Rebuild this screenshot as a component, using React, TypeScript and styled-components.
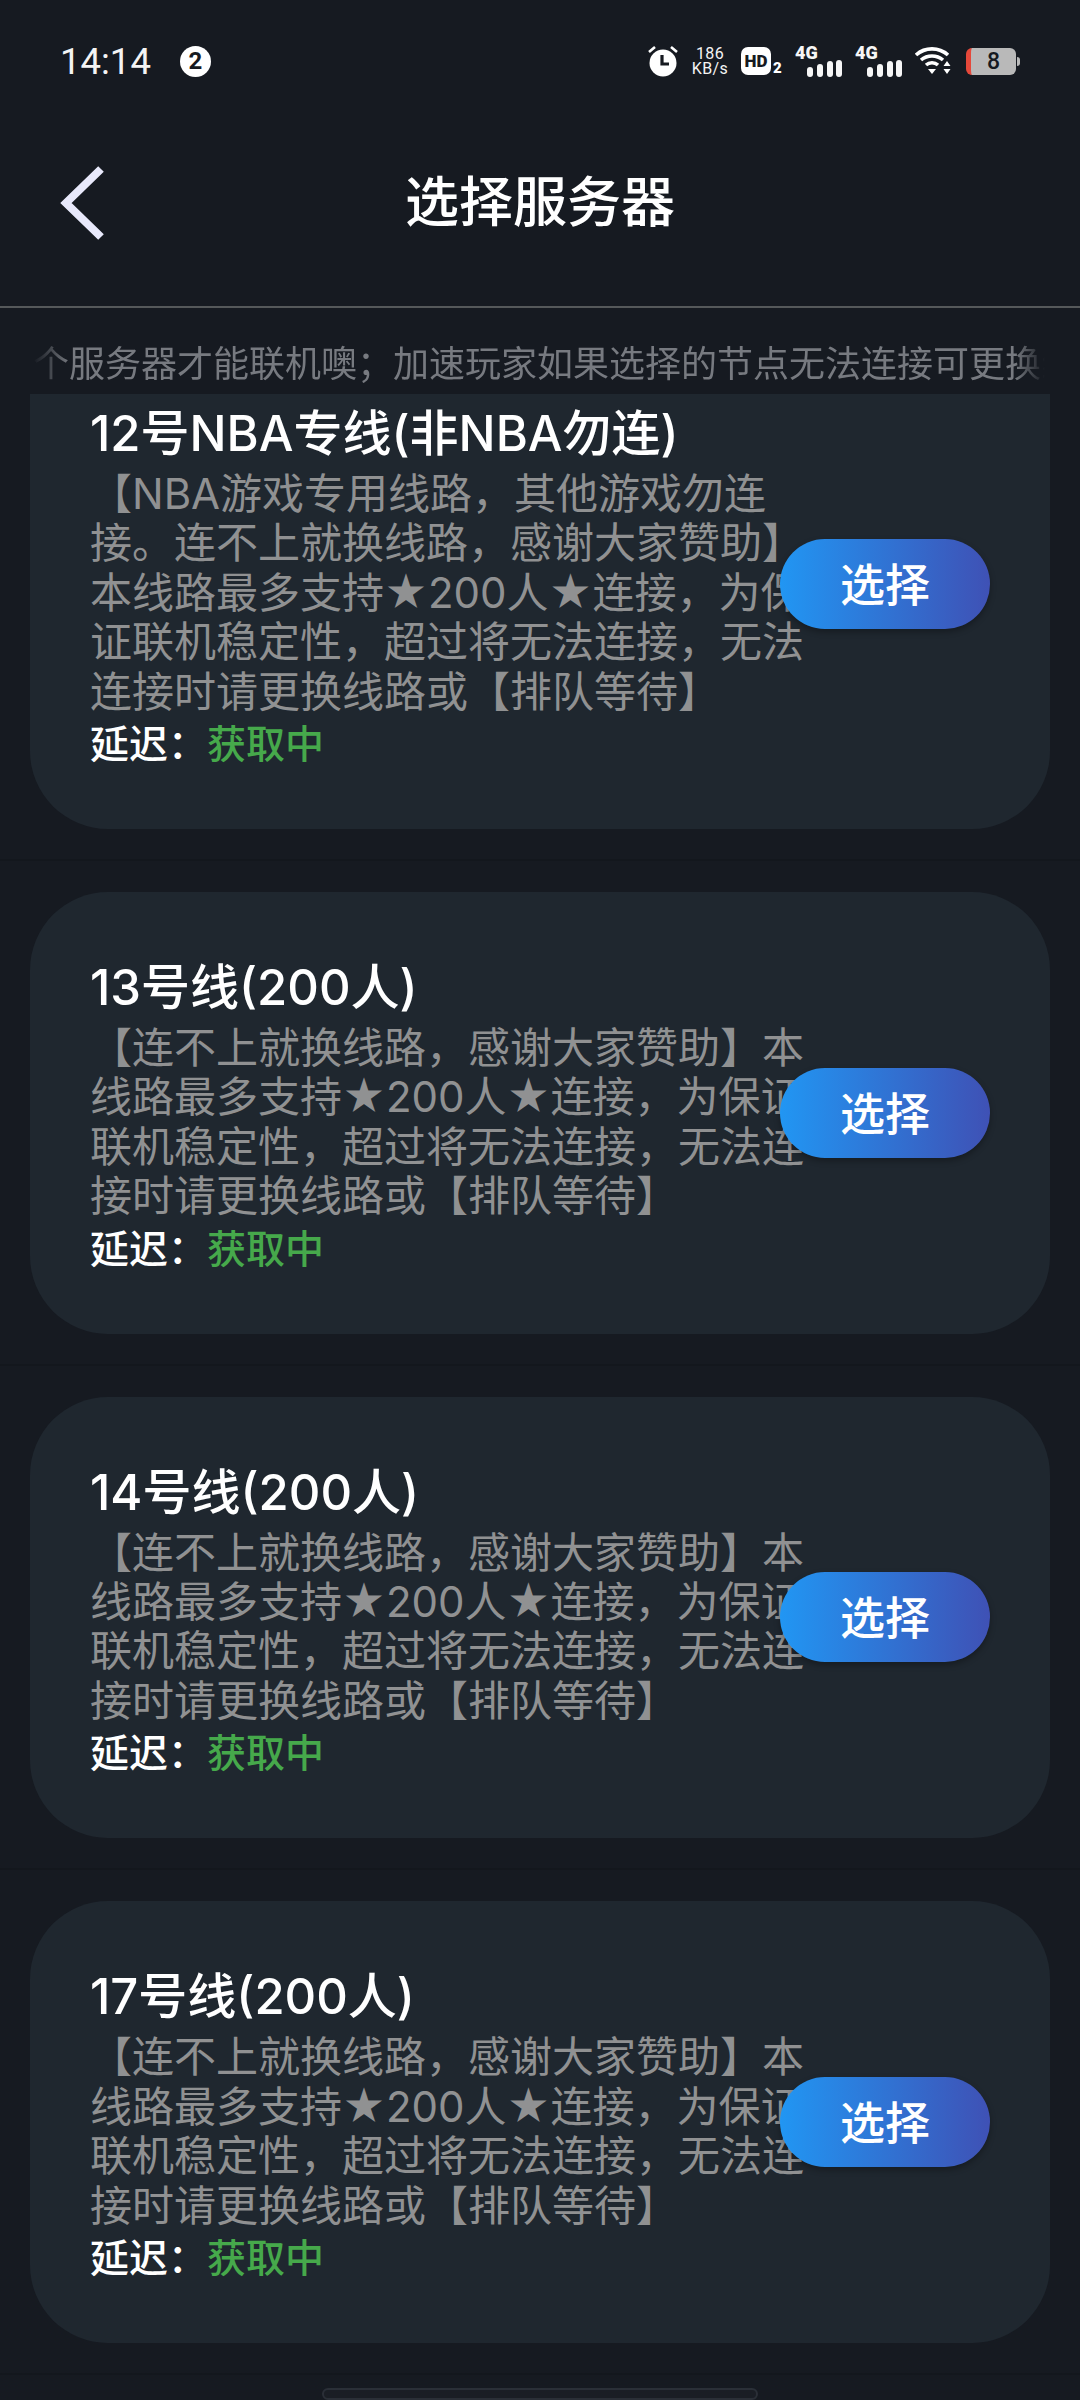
import React from "react";
import styled, { createGlobalStyle } from "styled-components";

const Global = createGlobalStyle`
  html, body { margin: 0; padding: 0; background: #161a21; }
  * { box-sizing: border-box; }
`;

const Page = styled.div`
  width: 1080px;
  height: 2400px;
  overflow: hidden;
  position: relative;
  background: #161a21;
  font-family: Inter, "Noto Sans CJK SC", sans-serif;
  color: #fff;
`;

const StatusBar = styled.div`
  height: 122px;
  padding: 0 60px;
  display: flex;
  align-items: center;
  justify-content: space-between;
`;

const StatusLeft = styled.div`
  display: flex;
  align-items: center;
  gap: 29px;
`;

const Time = styled.span`
  font-family: Roboto, sans-serif;
  font-size: 36.5px;
  color: #f4f4f4;
  width: 91px;
`;

const NotifBadge = styled.span`
  width: 31px;
  height: 31px;
  border-radius: 50%;
  background: #fff;
  color: #161a21;
  font: 700 24px/31px Roboto, sans-serif;
  text-align: center;
`;

const StatusRight = styled.div`
  display: flex;
  align-items: center;
`;

const SpeedText = styled.div`
  width: 38px;
  margin: 0 12px 0 13px;
  font: 400 16px/15.5px Roboto, sans-serif;
  letter-spacing: 0.4px;
  text-align: center;
  color: #f4f4f4;
  white-space: nowrap;
`;

const HdGroup = styled.div`
  display: flex;
  align-items: flex-end;
  width: 43px;
`;

const HdBox = styled.span`
  width: 30px;
  height: 28px;
  border-radius: 7px;
  background: #fff;
  color: #161a21;
  font: 900 17px/28px Roboto, sans-serif;
  text-align: center;
`;

const HdSub = styled.span`
  margin-left: 2px;
  font: 900 15px/14px Roboto, sans-serif;
  color: #fff;
`;

const Signal = styled.div<{ $gap: number }>`
  display: flex;
  flex-direction: column;
  width: 47px;
  margin-left: ${(p) => p.$gap}px;
`;

const SignalLabel = styled.span`
  font: 900 18px/14px Roboto, sans-serif;
  color: #f6f6f6;
`;

const SignalBars = styled.svg`
  display: block;
  width: 35px;
  height: 17px;
  margin-left: 12px;
`;

const WifiIcon = styled.svg`
  width: 36px;
  height: 28px;
  margin-left: 13px;
`;

const Battery = styled.div`
  position: relative;
  width: 50px;
  height: 27px;
  margin: 0 4px 0 15px;
  border-radius: 6px;
  border-left: 5px solid #e5483a;
  background: #b9b9b9;
  color: #161a21;
  font: 500 23px/27px Roboto, sans-serif;
  text-align: center;

  &::after {
    content: "";
    position: absolute;
    right: -4px;
    top: 9px;
    width: 3px;
    height: 9px;
    border-radius: 0 3px 3px 0;
    background: #b9b9b9;
  }
`;

const NavBar = styled.header`
  height: 186px;
  padding-bottom: 22px;
  border-bottom: 2px solid #55585a;
  display: grid;
  grid-template-columns: 1fr auto 1fr;
  align-items: center;
`;

const BackIcon = styled.svg`
  width: 44px;
  height: 74px;
  margin-left: 60px;
`;

const Title = styled.h1`
  margin: 0;
  font-size: 54px;
  font-weight: 500;
  line-height: 70px;
`;

const Marquee = styled.div`
  height: 86px;
  padding: 26px 38px 0 33px;
  overflow: hidden;
  white-space: nowrap;
  font-size: 36px;
  line-height: 60px;
  color: #777a80;
  -webkit-mask-image: linear-gradient(90deg, transparent 33px, #000 70px, #000 1015px, transparent 1045px);
  mask-image: linear-gradient(90deg, transparent 33px, #000 70px, #000 1015px, transparent 1045px);
`;

const List = styled.div`
  height: 2006px;
  overflow: hidden;
`;

const Item = styled.div<{ $first?: boolean }>`
  padding: 31px 30px 30px;
  border-bottom: 2px solid #13171d;
  margin-top: ${(p) => (p.$first ? "-87px" : "0")};
`;

const Card = styled.section<{ $first?: boolean }>`
  position: relative;
  background: #1f272f;
  border-radius: ${(p) => (p.$first ? "0 0 78px 78px" : "78px")};
  padding: 60px 0 57px 60px;
`;

const CardTitle = styled.h2`
  margin: 0;
  font-size: 49px;
  font-weight: 500;
  line-height: 71px;
  white-space: nowrap;
`;

const Desc = styled.p`
  margin: 0;
  width: 716px;
  font-size: 42px;
  line-height: 49.4px;
  color: #909192;
`;

const Delay = styled.div`
  height: 56px;
  font-size: 39px;
  font-weight: 500;
  line-height: 56px;
`;

const DelayValue = styled.span`
  color: #46a94b;
`;

const SelectButton = styled.button`
  position: absolute;
  right: 60px;
  top: 50%;
  transform: translateY(-50%);
  width: 210px;
  height: 90px;
  padding: 0 0 3px;
  border: 0;
  border-radius: 45px;
  background: linear-gradient(90deg, #2196f3, #3f51b5);
  color: #fff;
  font-family: inherit;
  font-size: 45px;
  font-weight: 500;
  box-shadow: 0 3px 6px rgba(0, 0, 0, 0.3);
`;

const HomeBar = styled.div`
  position: absolute;
  left: 322px;
  top: 2388px;
  width: 436px;
  height: 12px;
  border-radius: 6px;
  border: 2px solid #2a2f37;
  background: #1a1e25;
`;

const Bars = ({ gap }: { gap: number }) => (
  <Signal $gap={gap}>
    <SignalLabel>4G</SignalLabel>
    <SignalBars viewBox="0 0 35 17">
      <rect x="0" y="7" width="6" height="10" rx="3" fill="#f6f6f6" />
      <rect x="10" y="4" width="6" height="13" rx="3" fill="#f6f6f6" />
      <rect x="20" y="1" width="6" height="16" rx="3" fill="#f6f6f6" />
      <rect x="29" y="0" width="6" height="17" rx="3" fill="#f6f6f6" />
    </SignalBars>
  </Signal>
);

const servers = [
  {
    name: "12号NBA专线(非NBA勿连)",
    text: "【NBA游戏专用线路，其他游戏勿连接。连不上就换线路，感谢大家赞助】本线路最多支持★200人★连接，为保证联机稳定性，超过将无法连接，无法连接时请更换线路或【排队等待】",
  },
  {
    name: "13号线(200人)",
    text: "【连不上就换线路，感谢大家赞助】本线路最多支持★200人★连接，为保证联机稳定性，超过将无法连接，无法连接时请更换线路或【排队等待】",
  },
  {
    name: "14号线(200人)",
    text: "【连不上就换线路，感谢大家赞助】本线路最多支持★200人★连接，为保证联机稳定性，超过将无法连接，无法连接时请更换线路或【排队等待】",
  },
  {
    name: "17号线(200人)",
    text: "【连不上就换线路，感谢大家赞助】本线路最多支持★200人★连接，为保证联机稳定性，超过将无法连接，无法连接时请更换线路或【排队等待】",
  },
];

export default function App() {
  return (
    <Page>
      <Global />
      <StatusBar>
        <StatusLeft>
          <Time>14:14</Time>
          <NotifBadge>2</NotifBadge>
        </StatusLeft>
        <StatusRight>
          <svg width="30" height="32" viewBox="0 0 30 32">
            <circle cx="15" cy="18" r="13.5" fill="#fff" />
            <path d="M14 10v9h7" stroke="#161a21" strokeWidth="3.2" fill="none" />
            <path d="M1 7l6-5M29 7l-6-5" stroke="#fff" strokeWidth="2.6" />
          </svg>
          <SpeedText>186<br />KB/s</SpeedText>
          <HdGroup>
            <HdBox>HD</HdBox>
            <HdSub>2</HdSub>
          </HdGroup>
          <Bars gap={11} />
          <Bars gap={13} />
          <WifiIcon viewBox="0 0 36 28">
            <path d="M1 8a24 24 0 0 1 32 0M6 13a17 17 0 0 1 22 0M11 18a9 9 0 0 1 12 0" stroke="#fff" strokeWidth="3.6" fill="none" />
            <path d="M13 22h8l-4 5z" fill="#fff" />
            <path d="M32 14l3.5 5h-7zM32 27l3.5-5h-7z" fill="#fff" />
          </WifiIcon>
          <Battery>8</Battery>
        </StatusRight>
      </StatusBar>
      <NavBar>
        <BackIcon viewBox="0 0 44 74">
          <path d="M41 3L6 37l35 34" stroke="#e8e9fb" strokeWidth="8" fill="none" />
        </BackIcon>
        <Title>选择服务器</Title>
      </NavBar>
      <Marquee>个服务器才能联机噢；加速玩家如果选择的节点无法连接可更换线路</Marquee>
      <List>
        {servers.map((s, i) => (
          <Item key={s.name} $first={i === 0}>
            <Card $first={i === 0}>
              <CardTitle>{s.name}</CardTitle>
              <Desc>{s.text}</Desc>
              <Delay>延迟：<DelayValue>获取中</DelayValue></Delay>
              <SelectButton>选择</SelectButton>
            </Card>
          </Item>
        ))}
      </List>
      <HomeBar />
    </Page>
  );
}
